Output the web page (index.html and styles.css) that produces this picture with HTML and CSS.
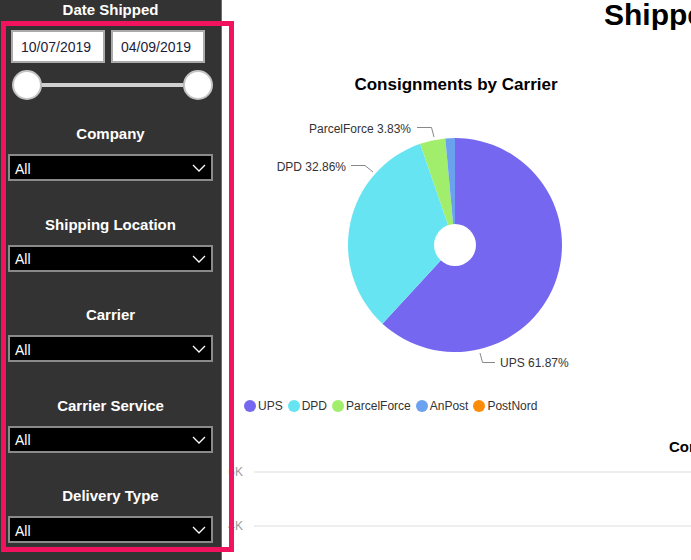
FILE: index.html
```html
<!DOCTYPE html>
<html lang="en">
<head>
<meta charset="utf-8">
<title>Shipped Consignments</title>
<link rel="stylesheet" href="styles.css">
</head>
<body>
<div class="page">
  <aside class="sidebar">
    <div class="filter-title">Date Shipped</div>
    <div class="date-row">
      <div class="date-box">10/07/2019</div>
      <div class="date-box">04/09/2019</div>
    </div>
    <div class="slider">
      <span class="knob"></span>
      <span class="track"></span>
      <span class="knob"></span>
    </div>
    <div class="filters">
      <div class="filter">
        <div class="filter-title">Company</div>
        <div class="dropdown"><span>All</span><svg class="chev" width="14" height="8" viewBox="0 0 14 8"><polyline points="1,1 7,7 13,1" fill="none" stroke="#fff" stroke-width="1.3"/></svg></div>
      </div>
      <div class="filter">
        <div class="filter-title">Shipping Location</div>
        <div class="dropdown"><span>All</span><svg class="chev" width="14" height="8" viewBox="0 0 14 8"><polyline points="1,1 7,7 13,1" fill="none" stroke="#fff" stroke-width="1.3"/></svg></div>
      </div>
      <div class="filter">
        <div class="filter-title">Carrier</div>
        <div class="dropdown"><span>All</span><svg class="chev" width="14" height="8" viewBox="0 0 14 8"><polyline points="1,1 7,7 13,1" fill="none" stroke="#fff" stroke-width="1.3"/></svg></div>
      </div>
      <div class="filter">
        <div class="filter-title">Carrier Service</div>
        <div class="dropdown"><span>All</span><svg class="chev" width="14" height="8" viewBox="0 0 14 8"><polyline points="1,1 7,7 13,1" fill="none" stroke="#fff" stroke-width="1.3"/></svg></div>
      </div>
      <div class="filter">
        <div class="filter-title">Delivery Type</div>
        <div class="dropdown"><span>All</span><svg class="chev" width="14" height="8" viewBox="0 0 14 8"><polyline points="1,1 7,7 13,1" fill="none" stroke="#fff" stroke-width="1.3"/></svg></div>
      </div>
    </div>
  </aside>

  <main class="main">
    <h1 class="page-title">Shipped Consignments</h1>

    <section class="pie-card">
      <h2 class="card-title">Consignments by Carrier</h2>
      <svg class="pie" width="434" height="290" viewBox="0 0 434 290">
        <path d="M216,145 L216,38 A107,107 0 1 1 143.43,223.63 Z" fill="#7567ef"/>
        <path d="M216,145 L143.43,223.63 A107,107 0 0 1 181.16,43.83 Z" fill="#67e4f1"/>
        <path d="M216,145 L181.16,43.83 A107,107 0 0 1 206.30,38.44 Z" fill="#a1ee6c"/>
        <path d="M216,145 L206.30,38.44 A107,107 0 0 1 216,38 Z" fill="#6aa2f0"/>
        <circle cx="216" cy="145" r="21" fill="#fff"/>
        <polyline points="178,27.5 192.5,27.5 195,37" fill="none" stroke="#888" stroke-width="1"/>
        <polyline points="112,65.5 126,65.5 134,72" fill="none" stroke="#888" stroke-width="1"/>
        <polyline points="241,253 243.5,262.5 256,262.5" fill="none" stroke="#888" stroke-width="1"/>
        <text class="pie-label" x="172" y="33" text-anchor="end">ParcelForce 3.83%</text>
        <text class="pie-label" x="107" y="71" text-anchor="end">DPD 32.86%</text>
        <text class="pie-label" x="261" y="267">UPS 61.87%</text>
      </svg>
      <div class="legend">
        <span class="legend-item ups">UPS</span>
        <span class="legend-item dpd">DPD</span>
        <span class="legend-item pf">ParcelForce</span>
        <span class="legend-item anpost">AnPost</span>
        <span class="legend-item postnord">PostNord</span>
      </div>
    </section>

    <section class="line-card">
      <h2 class="line-title">Consignments by Date</h2>
      <div class="grid-row"><span class="axis-label">6K</span><span class="grid-line"></span></div>
      <div class="grid-row second"><span class="axis-label">4K</span><span class="grid-line"></span></div>
    </section>
  </main>

  <div class="highlight"></div>
</div>
</body>
</html>
```

FILE: styles.css
```css
* { box-sizing: border-box; }

html, body {
  margin: 0;
  padding: 0;
  background: #fff;
}

body {
  font-family: "Liberation Sans", Arial, sans-serif;
  width: 691px;
  height: 560px;
  overflow: hidden;
}

.page {
  position: relative;
  display: flex;
  width: 691px;
  height: 560px;
  overflow: hidden;
}

/* ---------- Sidebar ---------- */
.sidebar {
  flex: 0 0 221px;
  height: 560px;
  background: #333333;
  border-right: 1px solid #6e6e6e;
  padding: 0 8px;
}

.filter-title {
  color: #fff;
  font-weight: bold;
  font-size: 15px;
  line-height: 20px;
  height: 20px;
  text-align: center;
  white-space: nowrap;
}

.date-row {
  display: flex;
  gap: 6px;
  margin-top: 10px;
  padding-left: 3px;
}

.date-box {
  width: 94px;
  height: 33px;
  background: #fff;
  border: 2px solid #ababab;
  color: #1c1c3a;
  font-size: 14px;
  line-height: 31px;
  padding-left: 8px;
}

.slider {
  display: flex;
  align-items: center;
  margin-top: 7px;
  padding-left: 4px;
  height: 30px;
}

.knob {
  flex: 0 0 30px;
  width: 30px;
  height: 30px;
  border-radius: 50%;
  background: #fff;
  border: 2px solid #c4c4c4;
}

.track {
  flex: 0 0 141px;
  height: 4px;
  background: #d0d0d0;
}

.filters {
  display: flex;
  flex-direction: column;
  gap: 33.5px;
  margin-top: 24px;
}

.filter .filter-title {
  margin-bottom: 10px;
}

.dropdown {
  display: flex;
  align-items: center;
  justify-content: space-between;
  height: 27px;
  background: #000;
  border: 2px solid #8a8a8a;
  color: #fff;
  font-size: 14px;
  padding: 2px 5px 0 5px;
}

.chev {
  display: block;
  margin-top: -1px;
}

/* ---------- Main ---------- */
.main {
  flex: 1 1 auto;
  min-width: 0;
  display: flex;
  flex-direction: column;
  overflow: hidden;
}

.page-title {
  margin: 0;
  height: 30px;
  font-size: 30px;
  font-weight: bold;
  line-height: 30px;
  color: #000;
  padding-left: 382px;
  white-space: nowrap;
  overflow: hidden;
}

.pie-card {
  margin-top: 45px;
  margin-left: 17px;
  width: 434px;
}

.card-title {
  margin: 0;
  font-size: 17px;
  font-weight: bold;
  line-height: 20px;
  text-align: center;
  color: #000;
}

.pie {
  display: block;
  margin-top: 5px;
}

.pie-label {
  font-family: "Liberation Sans", Arial, sans-serif;
  font-size: 12px;
  fill: #333;
}

.legend {
  display: flex;
  gap: 5px;
  margin-top: 9px;
  padding-left: 5px;
  font-size: 12px;
  line-height: 14px;
  color: #333;
}

.legend-item {
  display: flex;
  align-items: center;
  gap: 2px;
}

.legend-item::before {
  content: "";
  width: 12px;
  height: 12px;
  border-radius: 50%;
  background: #999;
}

.legend-item.ups::before { background: #7567ef; }
.legend-item.dpd::before { background: #67e4f1; }
.legend-item.pf::before { background: #a1ee6c; }
.legend-item.anpost::before { background: #6aa2f0; }
.legend-item.postnord::before { background: #fa8c0a; }

.line-card {
  margin-top: 24px;
}

.line-title {
  margin: 0;
  font-size: 15px;
  font-weight: bold;
  line-height: 20px;
  color: #000;
  padding-left: 447px;
  white-space: nowrap;
  overflow: hidden;
}

.grid-row {
  display: flex;
  align-items: center;
  height: 14px;
  margin-top: 8px;
}

.grid-row.second {
  margin-top: 40px;
}

.axis-label {
  flex: 0 0 21px;
  text-align: right;
  font-size: 12px;
  color: #999;
  white-space: nowrap;
}

.grid-line {
  flex: 1 1 auto;
  height: 2px;
  margin-left: 11px;
  background: #eeeeee;
}

/* ---------- Highlight overlay ---------- */
.highlight {
  position: absolute;
  left: 1px;
  top: 21px;
  width: 233px;
  height: 531px;
  border: 5px solid #f2135e;
  pointer-events: none;
}
```
